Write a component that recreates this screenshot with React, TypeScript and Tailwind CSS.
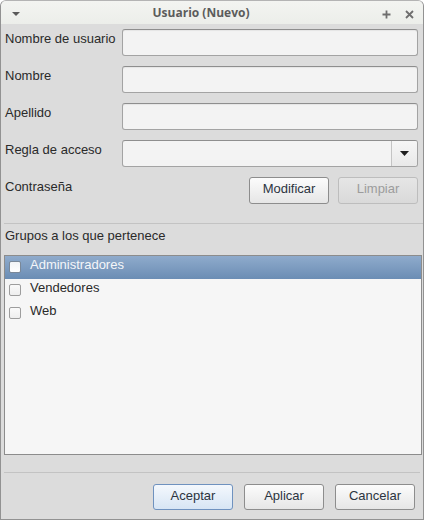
import React from "react";

const fieldRows = ["Nombre de usuario", "Nombre", "Apellido"];
const groups = [
  { name: "Administradores", selected: true },
  { name: "Vendedores", selected: false },
  { name: "Web", selected: false },
];

function Field() {
  return (
    <div className="flex-1 h-[27px] rounded-[3px] border border-[#a3a3a3] border-t-[#8e8e8e] bg-[#f3f3f3] shadow-[inset_0_1px_1px_rgba(0,0,0,0.06)]" />
  );
}

function Btn({
  label,
  disabled = false,
  primary = false,
  tall = true,
}: {
  label: string;
  disabled?: boolean;
  primary?: boolean;
  tall?: boolean;
}) {
  const base =
    "w-[80px] flex justify-center pt-[3px] leading-[16px] rounded-[3px] border text-[13px] ";
  const h = tall ? "h-[27px] " : "h-[26px] ";
  const look = disabled
    ? "border-[#bdbdbd] bg-gradient-to-b from-[#e6e6e6] to-[#d9d9d9] text-[#9c9c9c]"
    : primary
      ? "border-[#6f92bf] bg-gradient-to-b from-[#f4f8fd] to-[#d7e5f4] text-[#2c3440]"
      : "border-[#8d8d8d] bg-gradient-to-b from-[#fcfcfc] to-[#e6e6e6] text-[#2c3440]";
  return <div className={base + h + look}>{label}</div>;
}

function CheckBox({ onBlue }: { onBlue: boolean }) {
  return (
    <div
      className={
        "w-[12px] h-[12px] rounded-[2px] border " +
        (onBlue
          ? "border-[#7a8898] bg-gradient-to-b from-[#f2f4f7] to-[#ffffff]"
          : "border-[#9d9d9d] bg-gradient-to-b from-[#fafafa] to-[#eeeeee]")
      }
    />
  );
}

export default function App() {
  return (
    <div className="w-[424px] h-[520px] flex flex-col bg-[#dcdcdc] border border-[#929292] border-t-[#b4b4b4] rounded-t-[6px] overflow-hidden font-['Liberation_Sans',Arial,sans-serif] text-[13px] leading-[16px] text-[#2a2a2a]">
      {/* title bar */}
      <div className="relative h-[23px] shrink-0 flex items-center justify-center pr-[22px] bg-gradient-to-b from-[#f3f4f1] to-[#eceeea]">
        <svg className="absolute left-[11px] top-[11px]" width="8" height="4" viewBox="0 0 8 4">
          <path d="M0 0 L8 0 L4 4 Z" fill="#5a5a5a" />
        </svg>
        <span className="font-['Open_Sans',sans-serif] font-bold text-[12px] text-[#5c5c5c] pt-[1px]">
          Usuario (Nuevo)
        </span>
        <svg className="absolute left-[381px] top-[9px]" width="9" height="9" viewBox="0 0 9 9">
          <path d="M4.5 0.5 V8.5 M0.5 4.5 H8.5" stroke="#6e6e6e" strokeWidth="1.8" />
        </svg>
        <svg className="absolute left-[404px] top-[9px]" width="9" height="9" viewBox="0 0 9 9">
          <path d="M1 1 L8 8 M8 1 L1 8" stroke="#6e6e6e" strokeWidth="1.8" />
        </svg>
      </div>

      {/* form */}
      <div className="flex flex-col gap-[10px] pt-[5px] pl-[4px] pr-[5px]">
        {fieldRows.map((l) => (
          <div key={l} className="flex items-start">
            <div className="w-[117px] pt-[2px]">{l}</div>
            <Field />
          </div>
        ))}
        <div className="flex items-start">
          <div className="w-[117px] pt-[2px]">Regla de acceso</div>
          <div className="flex-1 h-[27px] flex rounded-[3px] border border-[#a3a3a3] border-t-[#8e8e8e] bg-[#f3f3f3] overflow-hidden">
            <div className="flex-1" />
            <div className="w-[26px] border-l border-[#c4c4c4] bg-gradient-to-b from-[#f6f6f6] to-[#e9e9e9] flex items-center justify-center">
              <svg width="9" height="5" viewBox="0 0 9 5">
                <path d="M0 0 L9 0 L4.5 5 Z" fill="#1e1e1e" />
              </svg>
            </div>
          </div>
        </div>
        <div className="flex items-start">
          <div className="flex-1 pt-[2px]">Contraseña</div>
          <div className="flex gap-[9px]">
            <Btn label="Modificar" />
            <Btn label="Limpiar" disabled />
          </div>
        </div>
      </div>

      <div className="mt-[19px] ml-[3px] h-px bg-[#c3c3c3]" />

      <div className="mt-[4px] pl-[4px]">Grupos a los que pertenece</div>

      {/* group list */}
      <div className="mt-[11px] ml-[3px] mr-[1px] h-[200px] border border-[#8c8c8c] bg-[#f6f6f6] flex flex-col">
        {groups.map((g) => (
          <div
            key={g.name}
            className={
              "h-[23px] shrink-0 flex items-start " +
              (g.selected ? "bg-gradient-to-b from-[#8fabcc] to-[#6b8db4] text-[#f4f6f9]" : "")
            }
          >
            <div className="pl-[4px] pt-[5px]">
              <CheckBox onBlue={g.selected} />
            </div>
            <div className="pl-[9px] leading-[17px]">{g.name}</div>
          </div>
        ))}
      </div>

      <div className="mt-[17px] ml-[3px] mr-[3px] h-px bg-[#c3c3c3]" />

      {/* dialog buttons */}
      <div className="mt-[11px] flex justify-end gap-[11px] pr-[8px]">
        <Btn label="Aceptar" primary tall={false} />
        <Btn label="Aplicar" tall={false} />
        <Btn label="Cancelar" tall={false} />
      </div>
    </div>
  );
}
